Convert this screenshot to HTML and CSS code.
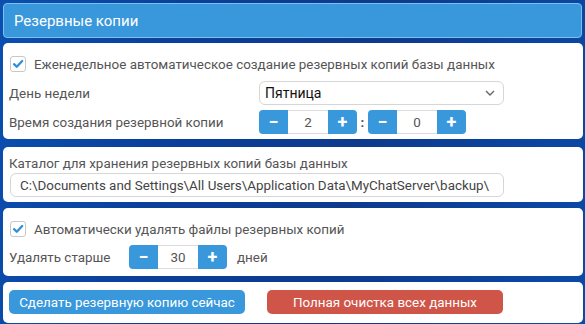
FILE: index.html
```html
<!DOCTYPE html>
<html lang="ru">
<head>
<meta charset="utf-8">
<link rel="stylesheet" href="styles.css">
</head>
<body>
<div class="wrap">
  <div class="header">Резервные копии</div>

  <div class="panel p1">
    <div class="row check-row">
      <span class="cb"><svg viewBox="0 0 16 16" width="16" height="16"><path d="M3.5 8.2 L6.6 11.2 L12.8 4.6" fill="none" stroke="#2f8fd8" stroke-width="2.6" stroke-linecap="round" stroke-linejoin="round"/></svg></span>
      <span class="text">Еженедельное автоматическое создание резервных копий базы данных</span>
    </div>
    <div class="row r2">
      <span class="label wide">День недели</span>
      <div class="select">
        <span class="sel-text">Пятница</span>
        <svg class="chev" viewBox="0 0 10 6" width="10" height="6"><path d="M1 1 L5 5 L9 1" fill="none" stroke="#666" stroke-width="1.4"/></svg>
      </div>
    </div>
    <div class="row r3">
      <span class="label wide">Время создания резервной копии</span>
      <div class="spin">
        <span class="btn minus">−</span><span class="val">2</span><span class="btn plus">+</span>
      </div>
      <span class="colon">:</span>
      <div class="spin">
        <span class="btn minus">−</span><span class="val">0</span><span class="btn plus">+</span>
      </div>
    </div>
  </div>

  <div class="panel p2">
    <div class="row lab-row"><span class="label">Каталог для хранения резервных копий базы данных</span></div>
    <div class="path">C:\Documents and Settings\All Users\Application Data\MyChatServer\backup\</div>
  </div>

  <div class="panel p3">
    <div class="row check-row">
      <span class="cb"><svg viewBox="0 0 16 16" width="16" height="16"><path d="M3.5 8.2 L6.6 11.2 L12.8 4.6" fill="none" stroke="#2f8fd8" stroke-width="2.6" stroke-linecap="round" stroke-linejoin="round"/></svg></span>
      <span class="text">Автоматически удалять файлы резервных копий</span>
    </div>
    <div class="row r3b">
      <span class="label short">Удалять старше</span>
      <div class="spin">
        <span class="btn minus">−</span><span class="val">30</span><span class="btn plus">+</span>
      </div>
      <span class="days">дней</span>
    </div>
  </div>

  <div class="panel p4">
    <span class="action blue">Сделать резервную копию сейчас</span>
    <span class="action red">Полная очистка всех данных</span>
  </div>
</div>
</body>
</html>
```

FILE: styles.css
```css
html, body {
  margin: 0;
  padding: 0;
}
body {
  width: 585px;
  height: 324px;
  overflow: hidden;
  font-family: Roboto, "Open Sans", "DejaVu Sans", sans-serif;
  font-size: 13.4px;
  color: #555;
  background: linear-gradient(100deg, #0b4fb0 0%, #0a3f9a 30%, #0d3a8d 60%, #0a4aa8 100%);
}
.wrap {
  padding: 3px 2px 0 3px;
}
.header {
  height: 33px;
  margin-right: 1px;
  background: #3898db;
  border: 1px solid #7cc0ee;
  border-radius: 4px;
  color: #fff;
  font-size: 15px;
  display: flex;
  align-items: center;
  padding-left: 10px;
}
.panel {
  background: #fff;
  border-radius: 5px;
  padding-left: 6px;
}
.p1 {
  margin-top: 5px;
  padding-top: 8px;
  padding-bottom: 5px;
}
.p2 {
  margin-top: 8px;
  padding-top: 6px;
  padding-bottom: 5px;
}
.p3 {
  margin-top: 6px;
  padding-top: 8px;
  padding-bottom: 7px;
}
.p4 {
  margin-top: 6px;
  padding-top: 8px;
  padding-bottom: 9px;
  display: flex;
  gap: 22px;
}
.row {
  display: flex;
  align-items: center;
}
.check-row {
  height: 26px;
}
.cb {
  width: 14px;
  height: 14px;
  border: 1px solid #c8c8c8;
  border-radius: 3px;
  margin-left: 1px;
  margin-right: 8px;
  display: flex;
  align-items: center;
  justify-content: center;
  background: #fff;
}
.cb svg {
  display: block;
}
.r2 {
  margin-top: 4px;
  height: 24px;
}
.r3 {
  margin-top: 5px;
  height: 24px;
}
.r3b {
  margin-top: 3px;
  height: 24px;
}
.label.wide {
  width: 250px;
}
.label.short {
  width: 120px;
}
.select {
  height: 22px;
  border: 1px solid #d6d6d6;
  border-radius: 6px;
  display: flex;
  align-items: center;
  justify-content: space-between;
  padding: 0 8px 0 5px;
  box-sizing: content-box;
  width: 230px;
  color: #111;
  font-size: 14px;
}
.chev {
  display: block;
}
.spin {
  display: flex;
  height: 24px;
}
.btn {
  width: 29px;
  background: #3898db;
  color: #fff;
  font-weight: bold;
  font-size: 18px;
  display: flex;
  align-items: center;
  justify-content: center;
  line-height: 1;
}
.minus {
  border-radius: 4px 0 0 4px;
}
.plus {
  border-radius: 0 4px 4px 0;
}
.val {
  width: 40px;
  box-sizing: border-box;
  border-top: 1px solid #ddd;
  border-bottom: 1px solid #ddd;
  display: flex;
  align-items: center;
  justify-content: center;
  color: #555;
}
.colon {
  width: 11px;
  text-align: center;
  color: #555;
  font-weight: bold;
}
.days {
  margin-left: 10px;
}
.lab-row {
  height: 20px;
}
.path {
  margin-left: 1px;
  width: 494px;
  height: 24px;
  box-sizing: border-box;
  border: 1px solid #d6d6d6;
  border-radius: 6px;
  padding-left: 9px;
  display: flex;
  align-items: center;
  color: #444;
  white-space: nowrap;
}
.action {
  width: 236px;
  height: 24px;
  border-radius: 5px;
  color: #fff;
  display: flex;
  align-items: center;
  justify-content: center;
  white-space: nowrap;
}
.action.blue {
  background: #3898db;
}
.action.red {
  background: #cf5548;
}
```
